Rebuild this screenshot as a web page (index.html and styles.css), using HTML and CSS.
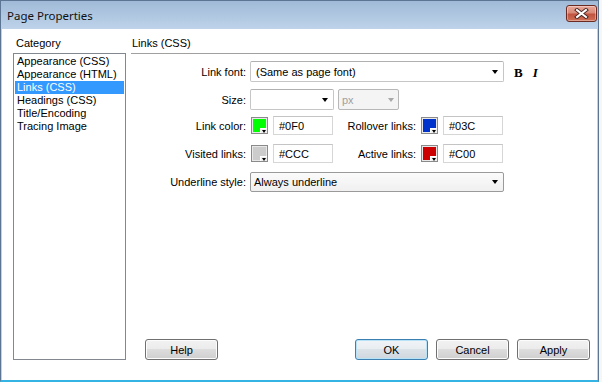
FILE: index.html
```html
<!DOCTYPE html>
<html lang="en">
  <head>
    <meta charset="utf-8" />
    <title>Page Properties</title>
    <link rel="stylesheet" href="styles.css">
  </head>
  <body>
    <div class="window">
      <div class="titlebar">
        <span class="title">Page Properties</span>
        <span class="close">
          <svg width="15" height="11" viewBox="0 0 15 11">
            <path d="M3 2 L12 9 M12 2 L3 9" stroke="#4a2520" stroke-width="4" stroke-linecap="square" />
            <path d="M3 2 L12 9 M12 2 L3 9" stroke="#fff" stroke-width="2" stroke-linecap="square" />
          </svg>
        </span>
      </div>

      <div class="client">
        <div class="category">
          <div class="heading">Category</div>
          <ul class="list">
            <li>Appearance (CSS)</li>
            <li>Appearance (HTML)</li>
            <li class="selected">Links (CSS)</li>
            <li>Headings (CSS)</li>
            <li>Title/Encoding</li>
            <li>Tracing Image</li>
          </ul>
        </div>

        <div class="panel">
          <div class="panel-title">Links (CSS)</div>

          <div class="form">
            <div class="row row-font">
              <span class="label">Link font:</span>
              <span class="combo combo-wide">
                <span>(Same as page font)</span>
                <span class="arrow"></span>
              </span>
              <span class="style-btn bold">B</span>
              <span class="style-btn italic">I</span>
            </div>

            <div class="row row-size">
              <span class="label">Size:</span>
              <span class="combo combo-size">
                <span></span>
                <span class="arrow"></span>
              </span>
              <span class="combo combo-unit disabled">
                <span>px</span>
                <span class="arrow"></span>
              </span>
            </div>

            <div class="row row-color">
              <span class="label">Link color:</span>
              <span class="swatch"><span class="fill fill-green"></span><span class="drop"></span></span>
              <span class="hex">#0F0</span>
              <span class="label label-2">Rollover links:</span>
              <span class="swatch"><span class="fill fill-blue"></span><span class="drop"></span></span>
              <span class="hex">#03C</span>
            </div>

            <div class="row row-visited">
              <span class="label">Visited links:</span>
              <span class="swatch"><span class="fill fill-gray"></span><span class="drop"></span></span>
              <span class="hex">#CCC</span>
              <span class="label label-2">Active links:</span>
              <span class="swatch"><span class="fill fill-red"></span><span class="drop"></span></span>
              <span class="hex">#C00</span>
            </div>

            <div class="row row-underline">
              <span class="label">Underline style:</span>
              <span class="combo combo-wide combo-list">
                <span>Always underline</span>
                <span class="arrow"></span>
              </span>
            </div>
          </div>

          <div class="buttons">
            <span class="btn btn-help">Help</span>
            <span class="spacer"></span>
            <span class="btn btn-default">OK</span>
            <span class="btn">Cancel</span>
            <span class="btn">Apply</span>
          </div>
        </div>
      </div>
    </div>
  </body>
</html>
```

FILE: styles.css
```css
* {
  margin: 0;
  padding: 0;
  box-sizing: border-box;
}

body {
  background: #f4f6f8;
  font-family: "Liberation Sans", Arial, sans-serif;
  font-size: 11px;
  color: #000;
}

.window {
  width: 599px;
  height: 382px;
  background: #bdd3eb;
  border: 1px solid #5b7592;
  border-bottom: 2px solid #33b4e2;
  display: flex;
  flex-direction: column;
}

/* title bar */

.titlebar {
  height: 28px;
  display: flex;
  align-items: flex-start;
  justify-content: space-between;
  background: linear-gradient(#a0bad7, #bed3ea);
}

.title {
  font-family: "Noto Sans", "Open Sans", sans-serif;
  font-size: 11.5px;
  line-height: 14px;
  margin: 8px 0 0 6px;
  color: #111;
}

.close {
  width: 31px;
  height: 17px;
  margin: 4px 1px 0 0;
  border: 1px solid #6b2a22;
  border-radius: 3px;
  background: linear-gradient(#e9a899 0, #d98a78 45%, #c2543f 55%, #cf6f55 100%);
  box-shadow: inset 0 0 0 1px rgba(255, 255, 255, 0.35);
  display: flex;
  align-items: center;
  justify-content: center;
}

/* client area */

.client {
  flex: 1;
  margin: 0 1px;
  background: #fff;
  padding: 7px 0 0 11px;
  display: grid;
  grid-template-columns: 113px 459px;
  grid-template-rows: 324px;
  column-gap: 5px;
}

.category {
  display: flex;
  flex-direction: column;
}

.heading,
.panel-title {
  line-height: 14px;
  padding-left: 3px;
}

.list {
  list-style: none;
  flex: 1;
  margin-top: 3px;
  border: 1px solid #828790;
  padding: 1px 1px;
}

.list li {
  height: 13px;
  line-height: 13px;
  padding-left: 2px;
  white-space: nowrap;
}

.list li.selected {
  background: #3399ff;
  color: #fff;
}

.panel {
  display: flex;
  flex-direction: column;
}

.panel-title {
  padding: 0 0 3px 1px;
  margin-right: 10px;
  border-bottom: 1px solid #a0a0a0;
}

/* form rows */

.form {
  margin-top: 7px;
}

.row {
  display: flex;
  align-items: center;
}

.row-font {
  height: 21px;
}

.row-size {
  height: 21px;
  margin-top: 7px;
}

.row-color {
  height: 19px;
  margin-top: 6px;
}

.row-visited {
  height: 19px;
  margin-top: 9px;
}

.row-underline {
  height: 20px;
  margin-top: 9px;
}

.label {
  width: 115px;
  margin-right: 4px;
  text-align: right;
  white-space: nowrap;
}

.label-2 {
  width: 83px;
}

.combo {
  height: 100%;
  display: flex;
  align-items: center;
  justify-content: space-between;
  border: 1px solid #c6c6c6;
  border-top-color: #b0b0b0;
  border-radius: 2px;
  background: #fff;
  padding: 0 5px 0 5px;
}

.combo-wide {
  width: 254px;
}

.combo-list {
  padding-left: 3px;
  border-color: #9a9a9a;
  background: linear-gradient(#fbfbfb, #f0f0f0);
}

.combo-size {
  width: 84px;
}

.combo-unit {
  width: 61px;
  margin-left: 4px;
  padding: 0 4px 0 3px;
}

.combo.disabled {
  background: #f4f4f4;
  border-color: #b7b7b7;
  color: #a0a0a0;
}

.arrow {
  width: 0;
  height: 0;
  border-left: 3.5px solid transparent;
  border-right: 3.5px solid transparent;
  border-top: 4px solid #000;
}

.disabled .arrow {
  border-top-color: #a8a8a8;
}

.style-btn {
  font-family: "Liberation Serif", "Times New Roman", serif;
  font-weight: bold;
  font-size: 13px;
  line-height: 13px;
  margin-top: 2px;
}

.bold {
  margin-left: 10px;
}

.italic {
  font-style: italic;
  margin-left: 10px;
}

/* colour swatches */

.swatch {
  width: 17px;
  height: 17px;
  margin: 0 5px 0 1px;
  border: 1px solid #8a8a8a;
  padding: 1px;
  background: #e8e8e8;
  position: relative;
  display: flex;
}

.fill {
  flex: 1;
}

.fill-green {
  background: #00ff00;
}

.fill-blue {
  background: #0033cc;
}

.fill-gray {
  background: #cccccc;
}

.fill-red {
  background: #cc0000;
}

.drop {
  position: absolute;
  right: 0;
  bottom: 0;
  width: 7px;
  height: 5px;
  background: #f0f0f0;
  border-left: 1px solid #fff;
  border-top: 1px solid #fff;
  display: flex;
  justify-content: center;
  align-items: center;
}

.drop::after {
  content: "";
  border-left: 2.5px solid transparent;
  border-right: 2.5px solid transparent;
  border-top: 3px solid #000;
}

.hex {
  width: 60px;
  height: 100%;
  border: 1px solid #d6d6d6;
  border-top-color: #c4c4c4;
  padding-left: 5px;
  display: flex;
  align-items: center;
}

/* buttons */

.buttons {
  margin-top: auto;
  display: flex;
  height: 21px;
}

.spacer {
  flex: 1;
}

.btn {
  width: 73px;
  height: 21px;
  margin-left: 8px;
  display: flex;
  align-items: center;
  justify-content: center;
  border: 1px solid #707070;
  border-radius: 3px;
  background: linear-gradient(#f2f2f2 0, #ebebeb 50%, #dddddd 50%, #cfcfcf 100%);
  box-shadow: inset 0 0 0 1px #fcfcfc;
}

.btn-help {
  margin-left: 14px;
}

.btn-default {
  border-color: #3c7fb1;
  box-shadow: inset 0 0 0 1px #b8e2f8;
  background: linear-gradient(#f0f4f7 0, #e8edf1 50%, #dbe2e8 50%, #cfd7de 100%);
}
```
